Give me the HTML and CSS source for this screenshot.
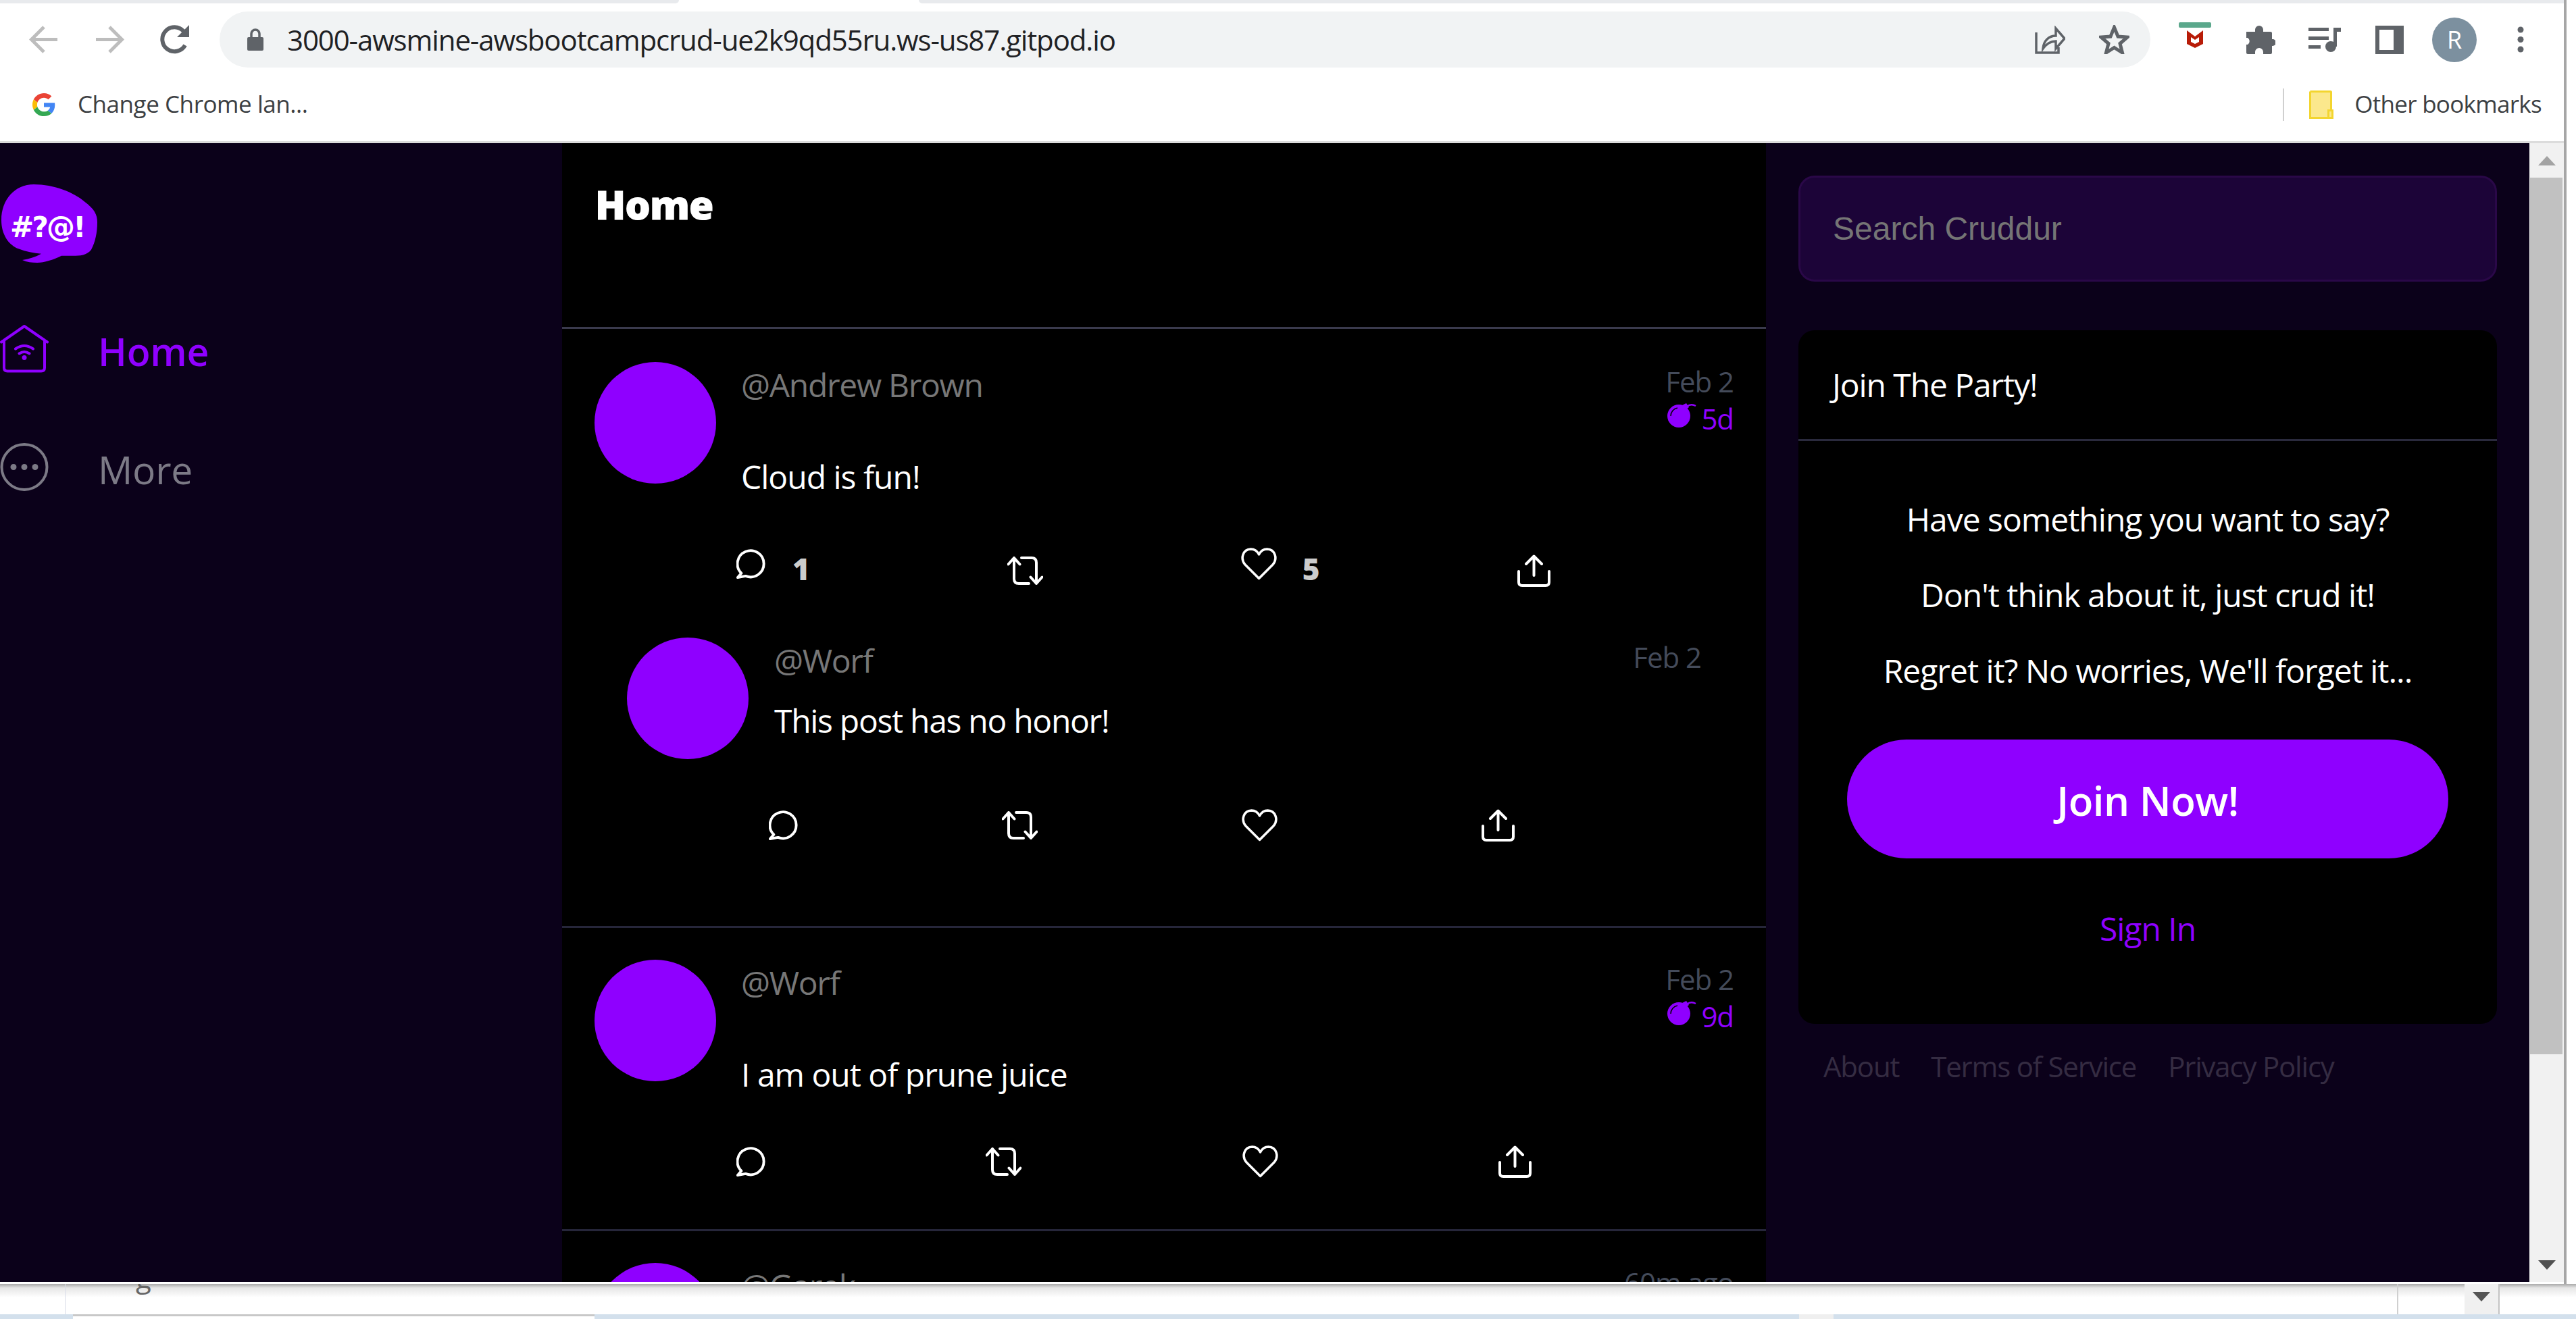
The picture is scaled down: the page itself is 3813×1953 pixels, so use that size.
FILE: index.html
```html
<!DOCTYPE html>
<html lang="en">
<head>
<meta charset="utf-8">
<title>Cruddur</title>
<link rel="stylesheet" href="styles.css">
</head>
<body>
<svg class="defs" width="0" height="0">
  <defs>
    <symbol id="i-reply" viewBox="0 0 44 44"><path d="M7.5 36A20 20 0 1 1 14 40.3L2 42.5Z"/></symbol>
    <symbol id="i-rt" viewBox="0 0 53 42"><path d="M1.500 11.500 10 2l8.500 9.500M10 2v31q0 7 7 7h15M21 2h15q7 0 7 7v31M34.500 30.500 43 40l8.500-9.500"/></symbol>
    <symbol id="i-heart" viewBox="0 0 53 48"><path d="M26.500 45.500 6 25C-1.500 16 2.500 2.500 14.500 2c5.500 0 9.500 3 12 8 2.500-5 6.500-8 12-8 12 .5 16 14 8.500 23Z"/></symbol>
    <symbol id="i-share" viewBox="0 0 49 48"><path d="M24.500 31V3M13 14 24.500 2.500 36 14M2 25v16q0 5 5 5h35q5 0 5-5V25"/></symbol>
    <symbol id="i-bomb" viewBox="0 0 43 36"><circle cx="17" cy="19" r="17" class="bomb-body"/><path d="M22 3l6-3 4 6-5 4Z" class="bomb-body"/><path d="M5 19A12 12 0 0 1 15 7" class="bomb-shine"/><path d="M29 5q6-5 13-1" class="bomb-fuse"/></symbol>
  </defs>
</svg>

<div class="window">
  <div class="tabstrip"><div class="tab-rest tab-left"></div><div class="tab-active"></div><div class="tab-rest tab-right"></div></div>

  <div class="toolbar">
    <svg class="t-back" width="44" height="43" viewBox="0 0 44 43"><path class="st-disabled" d="M42 21.500H4M22 3 3.500 21.500 22 40"/></svg>
    <svg class="t-fwd" width="44" height="43" viewBox="0 0 44 43"><path class="st-disabled" d="M2 21.500h38M22 3l18.500 18.500L22 40"/></svg>
    <svg class="t-reload" width="45" height="43" viewBox="0 0 45 43"><path class="st-grey" d="M38 30A18 18 0 1 1 36 9.500"/><path class="fi-grey" d="M44 0v18H26Z"/></svg>
    <div class="omnibox">
      <svg class="lock" width="24" height="33" viewBox="0 0 24 33"><path class="fi-grey" d="M2 13h20q2 0 2 2v16q0 2-2 2H2q-2 0-2-2V15q0-2 2-2Z"/><path class="st-grey-thin" d="M6 14V8a6 6 0 0 1 12 0v6"/></svg>
      <span class="url">3000-awsmine-awsbootcampcrud-ue2k9qd55ru.ws-us87.gitpod.io</span>
      <span class="grow"></span>
      <svg class="o-share" width="45" height="42" viewBox="0 0 45 42"><path class="st-grey-thin" d="M2 10v30h33v-8M12 34c1-12 9-19 19-19V4l13 15-13 15V23c-8 0-14 4-19 11Z"/></svg>
      <svg class="o-star" width="45" height="43" viewBox="0 0 45 43"><path class="st-grey-star" d="M22.500 3.500 28 17l14 1-11 9.500L34.500 41 22.500 33.500 10.500 41 14 27.500 3 18l14-1Z"/></svg>
    </div>
    <svg class="t-mc" width="48" height="38" viewBox="0 0 48 38"><rect width="48" height="8" rx="2" class="fi-green"/><path class="fi-red" d="M12 12l12 9 12-9v20l-12 6-12-6Zm6 10v7l6 3 6-3v-7l-6 4Z"/></svg>
    <svg class="t-puzzle" width="43" height="42" viewBox="0 0 43 42"><path class="fi-grey" d="M0 9h13V6a6 6 0 0 1 12 0v3h11q2 0 2 2v9h1a5 5 0 0 1 0 10h-1v10q0 2-2 2H25v-3a6 6 0 0 0-12 0v3H2q-2 0-2-2V28h2a6 6 0 0 0 0-10H0Z"/></svg>
    <svg class="t-media" width="48" height="36" viewBox="0 0 48 36"><path class="fi-grey" d="M0 0h30v5H0Zm0 13h30v5H0Zm0 13h18v5H0Z"/><circle cx="33" cy="28" r="8" class="fi-grey"/><path class="fi-grey" d="M37 0h11v6h-6v22h-5Z"/></svg>
    <svg class="t-panel" width="42" height="42" viewBox="0 0 42 42"><path class="fi-grey" fill-rule="evenodd" d="M0 0h42v42H0Zm6 6v30h21V6Z"/></svg>
    <div class="profile">R</div>
    <svg class="t-dots" width="10" height="39" viewBox="0 0 10 39"><circle cx="5" cy="5" r="4.500" class="fi-grey"/><circle cx="5" cy="19.500" r="4.500" class="fi-grey"/><circle cx="5" cy="34" r="4.500" class="fi-grey"/></svg>
  </div>

  <div class="bookmarks">
    <svg class="g-logo" width="34" height="36" viewBox="0 0 48 48">
      <path fill="#EA4335" d="M24 9.500c3.540 0 6.710 1.220 9.210 3.600l6.850-6.850C35.900 2.380 30.470 0 24 0 14.620 0 6.510 5.380 2.560 13.220l7.980 6.190C12.430 13.720 17.740 9.500 24 9.500z"/>
      <path fill="#4285F4" d="M46.980 24.550c0-1.570-.15-3.090-.38-4.550H24v9.020h12.940c-.58 2.960-2.260 5.480-4.780 7.180l7.730 6c4.510-4.180 7.090-10.360 7.090-17.650z"/>
      <path fill="#FBBC05" d="M10.530 28.590c-.48-1.450-.76-2.990-.76-4.590s.27-3.140.76-4.590l-7.980-6.190C.92 16.460 0 20.120 0 24c0 3.880.92 7.540 2.560 10.780l7.970-6.190z"/>
      <path fill="#34A853" d="M24 48c6.480 0 11.930-2.130 15.890-5.810l-7.730-6c-2.150 1.450-4.920 2.300-8.160 2.300-6.260 0-11.570-4.220-13.470-9.910l-7.980 6.190C6.510 42.620 14.620 48 24 48z"/>
    </svg>
    <span class="bm-text bm-first">Change Chrome lan...</span>
    <span class="grow"></span>
    <span class="bm-sep"></span>
    <svg class="folder" width="36" height="42" viewBox="0 0 36 42"><path class="fi-folder" d="M1.500 1.500h30q1 0 1 1v27h2v11h-33Z"/><path class="st-folder" d="M1.500 1.500h30q1 0 1 1v27M1.500 1.500v39h33v-11h-6v11"/></svg>
    <span class="bm-text bm-other">Other bookmarks</span>
  </div>

  <div class="app">
    <aside class="side-left">
      <svg class="logo" width="146" height="118" viewBox="0 0 146 116" preserveAspectRatio="none">
        <path class="logo-bubble" d="M2 52C2 22 22 0 50 0 80 0 110 12 125 25 140 36 144 44 144 55 144 70 141 84 135 95 129 103 118 104 108 104L91 104C78 110 66 114 55 114 47 114 40 113 33 110 42 109 52 106 61 101 50 100 38 98 28 94 12 88 2 72 2 52Z"/>
        <text class="logo-text" x="15" y="77">#?@!</text>
      </svg>
      <nav class="nav">
        <a class="nav-item nav-active">
          <svg class="nav-icon" width="72" height="71" viewBox="0 0 72 70"><path class="st-nav" d="M2 25 36 1.500 70 25M6 22v41q0 5 5 5h50q5 0 5-5V22"/><path class="st-nav" d="M23 35q13-9 26 0M28.500 42q7.500-5 15 0"/><circle cx="36" cy="48" r="3.500" class="fi-nav"/></svg>
          <span>Home</span>
        </a>
        <a class="nav-item nav-more">
          <svg class="nav-icon" width="72" height="71" viewBox="0 0 72 70"><circle cx="36" cy="35" r="33.500" class="st-nav"/><circle cx="20" cy="35" r="4.500" class="fi-nav"/><circle cx="36" cy="35" r="4.500" class="fi-nav"/><circle cx="52" cy="35" r="4.500" class="fi-nav"/></svg>
          <span>More</span>
        </a>
      </nav>
    </aside>

    <main class="feed">
      <header class="feed-head"><h1 class="feed-title">Home</h1></header>

      <article class="post post-a">
        <div class="item">
          <div class="avatar"></div>
          <div class="item-body">
            <div class="meta">
              <span class="name">@Andrew Brown</span>
              <div class="times">
                <div class="date">Feb 2</div>
                <div class="expires"><svg class="bomb" width="43" height="36"><use href="#i-bomb"/></svg><span>5d</span></div>
              </div>
            </div>
            <p class="message">Cloud is fun!</p>
            <div class="actions actions-a">
              <div class="act act-count"><svg class="ic" width="43" height="44"><use href="#i-reply"/></svg><span class="count count-reply">1</span></div>
              <div class="act"><svg class="ic" width="53" height="44"><use href="#i-rt"/></svg></div>
              <div class="act act-count"><svg class="ic ic-heart" width="53" height="48"><use href="#i-heart"/></svg><span class="count count-like">5</span></div>
              <div class="act"><svg class="ic" width="49" height="48"><use href="#i-share"/></svg></div>
            </div>
          </div>
        </div>
        <div class="item item-reply">
          <div class="avatar"></div>
          <div class="item-body">
            <div class="meta">
              <span class="name">@Worf</span>
              <div class="times"><div class="date">Feb 2</div></div>
            </div>
            <p class="message message-reply">This post has no honor!</p>
            <div class="actions actions-c">
              <div class="act"><svg class="ic" width="43" height="44"><use href="#i-reply"/></svg></div>
              <div class="act"><svg class="ic" width="53" height="44"><use href="#i-rt"/></svg></div>
              <div class="act"><svg class="ic ic-heart" width="53" height="48"><use href="#i-heart"/></svg></div>
              <div class="act"><svg class="ic" width="49" height="48"><use href="#i-share"/></svg></div>
            </div>
          </div>
        </div>
      </article>

      <article class="post post-b">
        <div class="item">
          <div class="avatar"></div>
          <div class="item-body">
            <div class="meta">
              <span class="name">@Worf</span>
              <div class="times">
                <div class="date">Feb 2</div>
                <div class="expires"><svg class="bomb" width="43" height="36"><use href="#i-bomb"/></svg><span>9d</span></div>
              </div>
            </div>
            <p class="message">I am out of prune juice</p>
            <div class="actions actions-b">
              <div class="act"><svg class="ic" width="43" height="44"><use href="#i-reply"/></svg></div>
              <div class="act"><svg class="ic" width="53" height="44"><use href="#i-rt"/></svg></div>
              <div class="act"><svg class="ic ic-heart" width="53" height="48"><use href="#i-heart"/></svg></div>
              <div class="act"><svg class="ic" width="49" height="48"><use href="#i-share"/></svg></div>
            </div>
          </div>
        </div>
      </article>

      <article class="post post-c">
        <div class="item">
          <div class="avatar"></div>
          <div class="item-body">
            <div class="meta">
              <span class="name">@Garek</span>
              <div class="times"><div class="date">60m ago</div></div>
            </div>
          </div>
        </div>
      </article>
    </main>

    <aside class="side-right">
      <input class="search" type="text" placeholder="Search Cruddur">
      <section class="card">
        <div class="card-title">Join The Party!</div>
        <div class="card-body">
          <p class="pitch">Have something you want to say?</p>
          <p class="pitch">Don't think about it, just crud it!</p>
          <p class="pitch">Regret it? No worries, We'll forget it...</p>
          <a class="join"><span class="join-label">Join Now!</span></a>
          <a class="signin">Sign In</a>
        </div>
      </section>
      <footer class="foot"><a>About</a><a>Terms of Service</a><a>Privacy Policy</a></footer>
    </aside>

    <div class="scrollbar">
      <div class="sb-btn"><span class="arrow-up"></span></div>
      <div class="sb-thumb"></div>
      <div class="sb-track"></div>
      <div class="sb-btn sb-btn-down"><span class="arrow-down"></span></div>
    </div>
  </div>
  <div class="window-foot"></div>
</div>

<div class="under">
  <div class="u-gutter"></div>
  <div class="u-doc"><span class="u-g">g</span></div>
  <div class="u-col"></div>
  <div class="u-sb"><span class="arrow-down arrow-dark"></span></div>
</div>
<div class="taskbar"><div class="tb-pad"></div><div class="tb-sheet"></div><div class="tb-mid"></div><div class="tb-chip"></div></div>
</body>
</html>
```
FILE: styles.css
```css
* { box-sizing: border-box; }
html, body { margin: 0; padding: 0; height: 1953px; overflow: hidden; }
body {
  width: 3813px;
  background: #fff;
  font-family: "Open Sans", "Noto Sans", sans-serif;
  color: #fff;
  letter-spacing: -1px;
}
p, h1 { margin: 0; }
svg { display: block; flex: none; }
.defs { position: absolute; }
.grow { flex: 1; }

.window {
  width: 3799px;
  height: 1901px;
  border-right: 4px solid #a6a6a6;
  display: flex;
  flex-direction: column;
  background: #fff;
}

/* browser chrome */
.tabstrip { height: 5px; display: flex; }
.tab-rest { background: #e8eaed; }
.tab-left { width: 1005px; border-bottom-right-radius: 5px; }
.tab-active { width: 355px; background: #fff; }
.tab-right { flex: 1; border-bottom-left-radius: 5px; }

.toolbar { height: 107px; padding-left: 43px; display: flex; align-items: center; }
.t-fwd { margin-left: 53px; }
.t-reload { margin-left: 52px; }
.omnibox {
  margin-left: 44px;
  width: 2858px;
  height: 83px;
  border-radius: 42px;
  background: #f1f3f4;
  padding: 0 31px 0 41px;
  display: flex;
  align-items: center;
}
.url { margin-left: 35px; font-size: 42px; color: #202124; letter-spacing: -1.120px; white-space: nowrap; }
.o-star { margin-left: 50px; }
.t-mc { margin-left: 42px; margin-top: -14px; }
.t-puzzle { margin-left: 52px; }
.t-media { margin-left: 49px; }
.t-panel { margin-left: 51px; }
.profile {
  margin-left: 42px;
  width: 66px;
  height: 66px;
  border-radius: 50%;
  background: #7c909f;
  color: #fff;
  font-size: 36px;
  letter-spacing: 0;
  display: flex;
  align-items: center;
  justify-content: center;
}
.t-dots { margin-left: 60px; }

.st-disabled { fill: none; stroke: #bdbdbd; stroke-width: 5; }
.st-grey { fill: none; stroke: #5f6368; stroke-width: 6; }
.st-grey-thin { fill: none; stroke: #5f6368; stroke-width: 3.500; }
.st-grey-star { fill: none; stroke: #5f6368; stroke-width: 5; }
.fi-grey { fill: #5f6368; }
.fi-green { fill: #5ba88c; }
.fi-red { fill: #b81c08; }
.fi-folder { fill: #fbe88c; }
.st-folder { fill: none; stroke: #f3d52f; stroke-width: 3; }

.bookmarks {
  height: 97px;
  padding: 0 33px 11px 48px;
  display: flex;
  align-items: center;
}
.bm-text { font-size: 35px; letter-spacing: -0.7px; color: #3c4043; white-space: nowrap; margin-bottom: 4px; }
.bm-first { margin-left: 33px; letter-spacing: -0.45px; }
.bm-sep { width: 2px; height: 48px; background: #d0d0d0; }
.folder { margin-left: 37px; }
.bm-other { margin-left: 31px; }

/* app */
.app {
  flex: none;
  height: 1689px;
  border-top: 3px solid #dcdcdc;
  display: flex;
  overflow: hidden;
  background: #0b011a;
}
.side-left { width: 832px; flex: none; }
.logo { margin-top: 61px; }
.logo-bubble { fill: #8f00ff; }
.logo-text { fill: #fff; font-family: "DejaVu Sans", sans-serif; font-weight: 700; font-size: 42px; letter-spacing: -2.800px; }
.nav { margin-top: 90px; display: flex; flex-direction: column; gap: 104px; }
.nav-item { height: 71px; display: flex; align-items: center; gap: 73px; font-size: 57px; letter-spacing: -0.200px; }
.nav-item span { line-height: 70px; margin-top: 6px; }
.nav-active { color: #8f00ff; font-weight: 600; }
.nav-more { color: #7c7a86; }
.st-nav { fill: none; stroke-width: 4; stroke-linecap: round; stroke-linejoin: round; }
.nav-active .st-nav { stroke: #8f00ff; }
.nav-more .st-nav { stroke: #7c7a86; }
.nav-active .fi-nav { fill: #8f00ff; }
.nav-more .fi-nav { fill: #7c7a86; }

.feed { width: 1782px; flex: none; background: #000; overflow: hidden; }
.feed-head { height: 275px; border-bottom: 3px solid #3a3a4d; padding: 0 0 0 49px; }
.feed-title {
  font-size: 59px;
  line-height: 80px;
  padding-top: 50px;
  font-weight: 800;
  letter-spacing: -0.900px;
  -webkit-text-stroke: 1px #fff;
}

.post { border-bottom: 3px solid #26263a; }
.post-a { height: 887px; }
.post-b { height: 449px; }
.item { display: flex; gap: 37px; padding: 47px 48px 0; }
.post-a > .item:first-child { padding-top: 49px; }
.item-reply { padding: 67px 96px 0 96px; }
.avatar { width: 180px; height: 180px; border-radius: 50%; background: #8f00ff; flex: none; }
.item-body { flex: 1; min-width: 0; padding-top: 2px; }
.item-reply .item-body { margin-left: 1px; }
.meta { display: flex; justify-content: space-between; align-items: flex-start; }
.name { font-size: 48px; line-height: 64px; letter-spacing: -1.300px; color: #777; }
.times { display: flex; flex-direction: column; align-items: flex-end; letter-spacing: -1.050px; margin: -2px 0 2px; }
.date { font-size: 42px; line-height: 58px; color: #444b5a; white-space: nowrap; }
.expires { display: flex; gap: 7px; margin-top: -2px; margin-bottom: -1px; font-size: 42px; line-height: 56px; color: #8f00ff; }
.bomb { margin-top: 5px; }
.bomb-body { fill: #8f00ff; }
.bomb-shine { fill: none; stroke: #000; stroke-width: 1.500; }
.bomb-fuse { fill: none; stroke: #8f00ff; stroke-width: 2.500; }

.message { margin-top: 25px; font-size: 48px; line-height: 64px; color: #fff; }
.message-reply { margin-top: 25px; letter-spacing: -1.300px; }

.actions { display: flex; justify-content: space-between; align-items: center; height: 64px; }
.actions-a { margin: 75px 271px 0 -7px; }
.actions-b { margin: 65px 299px 0 -7px; }
.actions-c { margin: 91px 276px 0 -8px; }
.act { display: flex; align-items: center; }
.act-count .ic { margin-bottom: 21px; }
.ic { fill: none; stroke: #fff; stroke-width: 4; stroke-linecap: round; stroke-linejoin: round; }
.ic-heart { stroke-width: 3.500; }
.count { font-size: 44px; line-height: 60px; font-weight: 800; color: #ccc; margin-bottom: 6px; letter-spacing: 0; }
.count-reply { margin-left: 40px; }
.count-like { margin-left: 38px; }

.side-right { flex: 1; min-width: 0; padding: 48px 48px 0; }
.search {
  display: block;
  width: 100%;
  height: 157px;
  background: #1c0438;
  border: 3px solid #2a0848;
  border-radius: 24px;
  padding: 0 48px;
  font-family: "Liberation Sans", Arial, sans-serif;
  font-size: 48px;
  letter-spacing: 0;
  color: #fff;
  outline: none;
}
.search::placeholder { color: #757575; opacity: 1; }
.card { margin-top: 72px; background: #000; border-radius: 24px; overflow: hidden; height: 1027px; }
.card-title { height: 164px; border-bottom: 3px solid #2a2a3d; padding: 49px 50px 0; font-size: 48px; line-height: 64px; letter-spacing: -1.100px; }
.card-body { padding-top: 84px; display: flex; flex-direction: column; align-items: center; }
.pitch { font-size: 48px; line-height: 64px; margin-bottom: 48px; white-space: nowrap; }
.pitch:nth-of-type(3) { margin-bottom: 70px; }
.join {
  width: 890px;
  height: 176px;
  border-radius: 88px;
  background: #8f00ff;
  color: #fff;
  font-size: 60px;
  font-weight: 600;
  letter-spacing: -0.500px;
  display: flex;
  align-items: center;
  justify-content: center;
}
.join-label { margin-top: 4px; }
.signin { margin-top: 72px; font-size: 48px; line-height: 64px; color: #8f00ff; }
.foot { margin-top: 35px; padding-left: 37px; display: flex; gap: 47px; font-size: 42px; line-height: 56px; letter-spacing: -1.200px; color: #352c42; }

.scrollbar { width: 51px; flex: none; background: #f1f1f1; display: flex; flex-direction: column; }
.sb-btn { height: 51px; display: flex; align-items: center; justify-content: center; }
.sb-thumb { height: 1298px; margin: 0 2px 0 1px; background: #c1c1c1; }
.sb-track { flex: 1; }
.arrow-up { width: 0; height: 0; border: 13px solid transparent; border-top: 0; border-bottom: 14px solid #a3a3a3; }
.arrow-down { width: 0; height: 0; border: 13px solid transparent; border-bottom: 0; border-top: 14px solid #505050; }

/* what lies behind the window */
.under {
  height: 45px;
  display: flex;
  background: linear-gradient(#a8a8a8 0, #e6e6e6 6px, #fff 20px);
  overflow: hidden;
}
.u-gutter { width: 97px; border-right: 1px solid #d8dce8; }
.u-doc { width: 3453px; border-right: 2px solid #d0d0d0; padding-left: 104px; }
.u-g { display: block; margin-top: -38px; font-size: 42px; line-height: 56px; color: #666; }
.u-col { width: 98px; }
.u-sb { width: 52px; background: #f0f0f0; border-right: 2px solid #c4c4c4; display: flex; justify-content: center; padding-top: 12px; }
.arrow-dark { border-top-color: #555; }
.taskbar { height: 7px; display: flex; background: #d3e0ec; }
.tb-pad { width: 108px; }
.tb-sheet { width: 772px; background: #fff; border-top: 3px solid #c8c8c8; }
.tb-mid { width: 1783px; }
.tb-chip { width: 51px; background: #efefef; }
```
